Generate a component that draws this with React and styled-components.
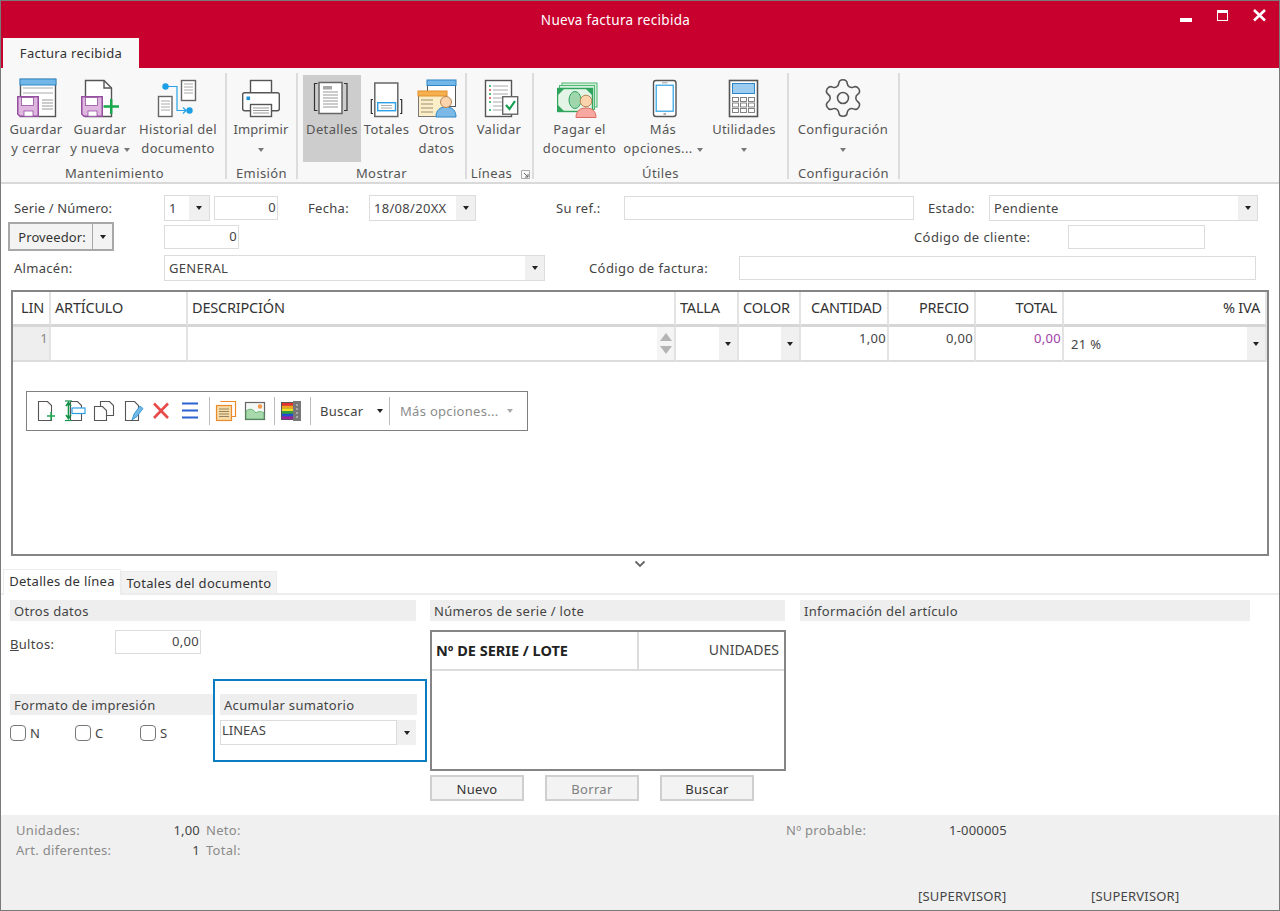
import React from 'react';
import styled, { createGlobalStyle } from 'styled-components';
import { Settings } from 'lucide-react';

const Global = createGlobalStyle`
  html, body { margin: 0; padding: 0; background: #fff; overflow: hidden; }
  * { box-sizing: border-box; }
`;

const Win = styled.div`
  width: 1280px; height: 911px; background: #fff; overflow: hidden;
  outline: 1px solid #7a7a7a; outline-offset: -1px;
  font-family: "Noto Sans", "Open Sans", sans-serif; font-size: 13px; color: #444; letter-spacing: .3px;
  display: flex; flex-direction: column;
`;
const Head = styled.div`height: 68px; background: #c8002d; display: flex; flex-direction: column;`;
const TitleRow = styled.div`height: 38px; display: flex; align-items: center; padding-right: 2px;`;
const Title = styled.div`flex: 1; text-align: center; padding-left: 63px; color: #fff; font-size: 13.5px; padding-top: 1px;`;
const Ctl = styled.div`width: ${p => p.$w}px; height: 38px; display: flex; justify-content: center; align-items: flex-start;`;
const Tab = styled.div`
  margin-left: 3px; width: 136px; height: 30px; background: #f8f8f8; color: #333;
  display: flex; align-items: center; justify-content: center; font-size: 13px;
`;
const Ribbon = styled.div`
  height: 116px; background: #f8f8f8; border-bottom: 2px solid #d9d9d9; padding-top: 5px; display: flex;
`;
const Group = styled.div`
  width: ${p => p.$w}px; height: 106px; border-right: 2px solid #dcdcdc; padding-left: ${p => p.$pl || 0}px;
  display: flex; flex-direction: column;
`;
const Btns = styled.div`display: flex; margin-top: 2px; height: 87px;`;
const RBtn = styled.div`
  width: ${p => p.$w}px; margin-left: ${p => p.$ml || 0}px; height: 87px; padding-top: 1px;
  background: ${p => p.$on ? '#cdcdcd' : 'transparent'};
  display: flex; flex-direction: column; align-items: center; text-align: center;
  line-height: 19px; color: #555; white-space: nowrap; letter-spacing: ${p => p.$ls || '.35px'};
  svg { flex: none; display: block; }
`;
const GLabel = styled.div`
  position: relative; margin-top: 5px; height: 13px; line-height: 13px; text-align: center; color: #555; letter-spacing: .4px;
`;
const Launcher = styled.svg`position: absolute; right: 2px; top: 3px;`;
const LinesText = styled.span`margin-right: 16px;`;
const Caret = styled.span`
  display: inline-block; width: 0; height: 0; vertical-align: middle; flex: none;
  border-left: 3.5px solid transparent; border-right: 3.5px solid transparent;
  border-top: 4px solid ${p => p.$c || '#222'};
  margin-left: ${p => p.$ml || 0}px;
`;

const Form = styled.div`padding-top: 11px;`;
const FormRow = styled.div`
  height: ${p => p.$h}px; margin-bottom: ${p => p.$mb || 0}px; display: flex; align-items: center;
`;
const Lbl = styled.div`
  width: ${p => p.$w}px; margin-left: ${p => p.$ml || 0}px; flex: none; color: #444; white-space: nowrap;
  letter-spacing: ${p => p.$ls || '.3px'};
`;
const BultosLbl = styled(Lbl)`padding-top: 3px;`;
const Input = styled.div`
  width: ${p => p.$w}px; margin-left: ${p => p.$ml || 0}px; height: ${p => p.$h || 24}px; flex: none;
  border: 1px solid #dcdcdc; background: #fff; padding: 0 1px 2px; display: flex; align-items: center;
  justify-content: flex-end; color: #444;
`;
const Combo = styled.div`
  width: ${p => p.$w}px; margin-left: ${p => p.$ml || 0}px; height: ${p => p.$h || 26}px; flex: none;
  border: 1px solid #dcdcdc; background: #fff; display: flex; color: #444;
`;
const ComboText = styled.div`flex: 1; padding: 0 0 1px 4px; display: flex; align-items: center; white-space: nowrap; overflow: hidden;`;
const Drop = styled.div`width: ${p => p.$w || 19}px; flex: none; background: #f0f0f0; display: flex; align-items: center; justify-content: center;`;
const SplitBtn = styled.div`
  margin-left: 8px; width: 106px; height: 29px; flex: none; display: flex; border: 2px solid #a8a8a8; background: #f3f3f3; color: #333;
  letter-spacing: .1px;
`;
const SplitMain = styled.div`width: 83px; border-right: 1px solid #a8a8a8; display: flex; align-items: center; justify-content: center; padding-left: 2px;`;
const SplitArrow = styled.div`flex: 1; display: flex; align-items: center; justify-content: center;`;

const Table = styled.div`
  margin-left: 11px; width: 1258px; height: 266px; border: 2px solid #858585; background: #fff; flex: none;
`;
const GridRow = styled.div`
  display: grid; height: ${p => p.$h}px;
  grid-template-columns: 38px 137px 488px 63px 62px 88px 87px 88px 203px;
`;
const Th = styled.div`
  border-right: 2px solid #e3e3e3; border-bottom: 3px solid #d6d6d6; display: flex; align-items: center;
  justify-content: ${p => p.$a === 'r' ? 'flex-end' : 'flex-start'};
  padding: 0 5px 2px 4px; color: #333; font-size: 14.5px; white-space: nowrap; letter-spacing: -0.2px;
`;
const Td = styled.div`
  position: relative; border-right: 2px solid #e3e3e3; border-bottom: 2px solid #dcdcdc;
  background: ${p => p.$bg || '#fff'}; display: flex;
  justify-content: ${p => p.$a === 'r' ? 'flex-end' : 'flex-start'};
  padding: ${p => p.$pad || '2px 1px 0 0'}; color: ${p => p.$c || '#444'};
`;
const CellDrop = styled.div`
  position: absolute; right: 0; top: 0; bottom: 0; width: 18px; background: #f0f0f0;
  display: flex; align-items: center; justify-content: center;
`;
const Scroll = styled.div`
  position: absolute; right: 0; top: 0; bottom: 0; width: 17px; background: #f4f4f4;
  display: flex; flex-direction: column; align-items: center; justify-content: space-around; padding: 4px 0;
`;
const ArrowUp = styled.span`width: 0; height: 0; border-left: 6px solid transparent; border-right: 6px solid transparent; border-bottom: 8px solid #b4b4b4;`;
const ArrowDown = styled.span`width: 0; height: 0; border-left: 6px solid transparent; border-right: 6px solid transparent; border-top: 8px solid #b4b4b4;`;
const Tool = styled.div`
  margin: 29px 0 0 13px; width: 502px; height: 40px; border: 1px solid #808080; padding-left: 5px;
  display: flex; align-items: center;
`;
const ToolIcon = styled.div`width: 29px; height: 24px; padding-left: 2px; flex: none;`;
const ToolSep = styled.div`width: 1px; height: 28px; background: #bcbcbc; margin: 0 ${p => p.$m ?? 1}px 0 ${p => p.$l ?? 3}px; flex: none;`;
const ToolText = styled.div`
  display: flex; align-items: center; width: ${p => p.$w}px; flex: none; white-space: nowrap; padding-left: ${p => p.$pl || 9}px;
  color: ${p => p.$dim ? '#8c8c8c' : '#444'}; justify-content: space-between; padding-right: ${p => p.$pr || 5}px;
`;

const ChevRow = styled.div`height: 15px; display: flex; justify-content: center; align-items: center;`;
const TabRow = styled.div`height: 24px; display: flex; align-items: flex-end; border-bottom: 2px solid #ededed; padding-left: 3px;`;
const SubTab = styled.div`
  height: ${p => p.$on ? 26 : 22}px; width: ${p => p.$w}px; margin-bottom: ${p => p.$on ? -2 : 0}px; flex: none;
  background: ${p => p.$on ? '#fff' : '#f2f2f2'}; border: 1px solid #ececec; border-bottom: none;
  color: #333; display: flex; align-items: center; justify-content: center; white-space: nowrap; letter-spacing: .3px;
  padding-bottom: ${p => p.$on ? 4 : 0}px;
`;
const Panel = styled.div`
  height: 220px; padding: 5px 0 0 10px; display: grid; grid-template-columns: 417px 355px 462px; column-gap: 3px;
`;
const Col = styled.div`display: flex; flex-direction: column; align-items: flex-start;`;
const Col3 = styled(Col)`margin-left: 12px;`;
const H = styled.div`
  height: 21px; width: ${p => p.$w ? p.$w + 'px' : '100%'}; background: #eeeeee; color: #444; padding-left: 4px;
  display: flex; align-items: center; white-space: nowrap; flex: none;
`;
const BultosRow = styled.div`display: flex; align-items: center; margin-top: 9px; height: 24px;`;
const PrintRow = styled.div`display: flex; margin-top: 25px;`;
const FormatBox = styled.div`width: 203px; padding-top: 15px;`;
const Checks = styled.div`display: flex; margin-top: 10px;`;
const Check = styled.div`width: 65px; display: flex; align-items: center; gap: 4px; color: #444; line-height: 14px;`;
const CheckBox = styled.span`width: 16px; height: 16px; border: 1.5px solid #777; border-radius: 4px; background: #fff; flex: none;`;
const SumBox = styled.div`width: 214px; height: 83px; border: 2px solid #0a7dc2; padding: 13px 0 0 5px;`;
const SumCombo = styled.div`margin-top: 5px; display: flex; height: 25px; width: 196px;`;
const SumText = styled.div`flex: 1; border: 1px solid #dcdcdc; padding-left: 1px; line-height: 18px; color: #444; letter-spacing: 0;`;
const SerialTable = styled.div`
  margin-top: 9px; width: 356px; height: 141px; border: 2px solid #858585; flex: none;
`;
const SerialHead = styled.div`display: grid; grid-template-columns: 205px 1fr; height: 39px; border-bottom: 2px solid #dcdcdc;`;
const SerialTh = styled.div`
  display: flex; align-items: center; padding: 0 5px 2px ${p => p.$r ? 5 : 4}px; white-space: nowrap;
  font-size: ${p => p.$r ? 14 : 14.5}px;
  justify-content: ${p => p.$r ? 'flex-end' : 'flex-start'};
  font-weight: ${p => p.$r ? 400 : 700}; color: ${p => p.$r ? '#444' : '#222'};
  border-left: ${p => p.$r ? '2px solid #dcdcdc' : 'none'}; letter-spacing: 0;
`;
const BtnRow = styled.div`display: flex; gap: 21px; margin-top: 4px;`;
const Btn = styled.div`
  width: 94px; height: 26px; border: 2px solid #cfcfcf; background: #f3f3f3; color: ${p => p.$dim ? '#808080' : '#333'};
  display: flex; align-items: center; justify-content: center; padding-top: 1px;
`;
const Foot = styled.div`flex: 1; background: #f0f0f0; padding-top: 5px;`;
const FootRow = styled.div`display: flex; height: 20px; align-items: center; margin-top: ${p => p.$mt || 0}px;`;
const FLbl = styled.div`
  width: ${p => p.$w}px; margin-left: ${p => p.$ml || 0}px; flex: none; color: #8a8a8a; white-space: nowrap; letter-spacing: .3px;
`;
const FVal = styled.div`
  width: ${p => p.$w}px; margin-left: ${p => p.$ml || 0}px; flex: none; color: #444; white-space: nowrap;
  text-align: ${p => p.$r ? 'right' : 'left'}; letter-spacing: .2px;
`;

const Ic = ({ x, y = 76, w = 44, h = 44, children }) => (
  <svg width={w} height={h} viewBox={`${x} ${y} ${w} ${h}`} fill="none">{children}</svg>
);
const Floppy = ({ x, y }) => (
  <g transform={`translate(${x} ${y})`}>
    <path d="M.75.75H21.25V20.25H3L.75 18Z" fill="#dfb6df" stroke="#94509f" strokeWidth="1.5" />
    <rect x="4.5" y="1.5" width="12" height="8" fill="#fff" stroke="#94509f" strokeWidth=".8" />
    <rect x="7" y="15" width="9" height="5.2" fill="#fff" stroke="#94509f" strokeWidth=".8" />
  </g>
);
const PageLines = ({ x1, x2, ys, c = '#b5b5b5', w = 1.4 }) => (
  <g stroke={c} strokeWidth={w}>{ys.map(y => <path key={y} d={`M${x1} ${y}H${x2}`} />)}</g>
);
const IconSaveClose = () => (
  <Ic x={14}>
    <rect x="20.5" y="79.5" width="35" height="37" fill="#fff" stroke="#555" strokeWidth="1.4" />
    <rect x="20" y="79" width="36" height="6" fill="#72b7e8" stroke="#2f86c6" />
    <PageLines x1={23} x2={53} ys={[88, 93]} c="#aaa" w={1} />
    <PageLines x1={42} x2={53} ys={[100, 103, 106, 109]} c="#999" w={1} />
    <Floppy x={17} y={96} />
  </Ic>
);
const IconSaveNew = () => (
  <Ic x={78}>
    <path d="M85.5 80.5H104L111.5 88V116.5H85.5Z" fill="#fff" stroke="#555" strokeWidth="1.4" />
    <path d="M104 80.5V88H111.5" stroke="#555" strokeWidth="1.4" />
    <Floppy x={81} y={96} />
    <path d="M103.5 106.5H119M111.2 99V114" stroke="#16a84a" strokeWidth="2.4" />
  </Ic>
);
const IconHistory = () => (
  <Ic x={156}>
    <rect x="181.5" y="80.5" width="14" height="20" fill="#fff" stroke="#666" strokeWidth="1.4" />
    <PageLines x1={184} x2={193} ys={[84, 87, 90, 93]} c="#aaa" w={1} />
    <rect x="158.5" y="96.5" width="13.5" height="20" fill="#fff" stroke="#666" strokeWidth="1.4" />
    <PageLines x1={161} x2={170} ys={[101, 104, 107, 110]} c="#aaa" w={1} />
    <path d="M166 86.5H177V110.5H186M183 107.5L186 110.5L183 113.5" stroke="#25a3e6" strokeWidth="1.2" />
    <circle cx="165.5" cy="86.5" r="3.2" fill="#1d9fe6" />
    <circle cx="189.5" cy="110.5" r="3.2" fill="#1d9fe6" />
  </Ic>
);
const IconPrint = () => (
  <Ic x={239}>
    <rect x="250.5" y="80.5" width="21" height="17" fill="#fff" stroke="#555" strokeWidth="1.4" />
    <rect x="242.7" y="92.7" width="36.6" height="18" rx="2" fill="#fff" stroke="#555" strokeWidth="1.4" />
    <rect x="246.5" y="96.5" width="3.6" height="3.6" fill="#1f8fd8" />
    <rect x="250.5" y="104.5" width="21" height="12" fill="#fff" stroke="#555" strokeWidth="1.4" />
    <PageLines x1={253} x2={269} ys={[108, 110.5, 113]} c="#999" w={1} />
  </Ic>
);
const IconDetails = () => (
  <Ic x={310}>
    <path d="M317.5 83.5H314.5V110.5H317.5M344 83.5H347V110.5H344" stroke="#333" strokeWidth="1.2" />
    <rect x="319" y="82.5" width="23" height="31" fill="#fff" stroke="#666" strokeWidth="1.5" />
    <rect x="323" y="86" width="9" height="3.5" fill="#a6a6a6" />
    <PageLines x1={323} x2={338} ys={[92, 95, 98, 101, 104, 107]} />
  </Ic>
);
const IconTotals = () => (
  <Ic x={364}>
    <rect x="373.8" y="83" width="23" height="33.5" fill="#fff" stroke="#666" strokeWidth="1.5" />
    <path d="M372 99.5H370.3V113.5H372M399 99.5H400.7V113.5H399" stroke="#333" strokeWidth="1.2" />
    <rect x="376.7" y="102.7" width="17.8" height="8" fill="#fff" stroke="#2aa0e6" strokeWidth="1.4" />
    <PageLines x1={380} x2={391} ys={[105.5, 108]} c="#aaa" w={1} />
  </Ic>
);
const IconOther = () => (
  <Ic x={414}>
    <rect x="426.5" y="80.5" width="28" height="26" fill="#fff" stroke="#555" strokeWidth="1" />
    <rect x="426" y="80" width="29" height="5.5" fill="#72b7e8" stroke="#2f86c6" />
    <rect x="417.5" y="91.5" width="28" height="25" fill="#fbeec8" stroke="#777" strokeWidth="1" />
    <rect x="417" y="91" width="29" height="5" fill="#f5b04f" stroke="#e18f28" />
    <PageLines x1={420} x2={432} ys={[100, 104, 108, 112]} c="#9b8f6e" w={1} />
    <path d="M435 117C435 110 439 107 445 107C451 107 455 110 455 117Z" fill="#7db9e6" stroke="#2f86c6" />
    <circle cx="445" cy="102" r="5.5" fill="#fbd3ad" stroke="#b88655" />
  </Ic>
);
const IconValidate = () => (
  <Ic x={477}>
    <rect x="485.5" y="80.5" width="26" height="36" fill="#fff" stroke="#555" strokeWidth="1.4" />
    <PageLines x1={493} x2={508} ys={[86, 90, 94, 98, 102, 106, 110]} c="#aaa" w={1} />
    <PageLines x1={489} x2={491} ys={[86, 94, 102, 110]} c="#17a84a" w={1.4} />
    <PageLines x1={489} x2={491} ys={[90, 98]} c="#e24a4a" w={1.4} />
    <rect x="502.7" y="96.7" width="15" height="17.5" fill="#fff" stroke="#666" strokeWidth="1.4" />
    <path d="M506 105L509.5 109L515 101" stroke="#10a050" strokeWidth="2.2" />
  </Ic>
);
const IconPay = () => (
  <Ic x={558}>
    <rect x="563" y="83" width="35" height="24" fill="#d4efdb" stroke="#4fb873" />
    <rect x="560.5" y="85.5" width="35" height="24" fill="#d4efdb" stroke="#4fb873" />
    <rect x="558.5" y="88.5" width="35" height="23" fill="#e4f5e8" stroke="#2ea45c" strokeWidth="1.4" />
    <ellipse cx="576" cy="100" rx="6" ry="8.5" fill="#9fd6ac" stroke="#2ea45c" />
    <path d="M559 89H565L559 95ZM559 111V105L565 111ZM593 89V95L587 89Z" fill="#2ea45c" />
    <path d="M577 117.5C577 111 581 108 587 108C593 108 597 111 597 117.5Z" fill="#f7a8a0" stroke="#dd6a60" />
    <circle cx="587" cy="101" r="5.8" fill="#fbd3ad" stroke="#b88655" />
  </Ic>
);
const IconPhone = () => (
  <Ic x={642}>
    <rect x="654.5" y="80.5" width="22.5" height="36" rx="2.5" fill="#fff" stroke="#555" strokeWidth="1.4" />
    <rect x="657.2" y="85.2" width="17" height="26" fill="#fff" stroke="#2aa0e6" strokeWidth="1.2" />
    <path d="M663 82.8H668.5" stroke="#999" />
    <path d="M664.5 114H667" stroke="#777" strokeWidth="1.2" />
  </Ic>
);
const IconCalc = () => (
  <Ic x={724}>
    <rect x="731.5" y="80.5" width="28" height="36" fill="#fff" stroke="#555" strokeWidth="1.6" />
    <rect x="734.5" y="83.5" width="22" height="10" fill="#9ccdf0" stroke="#2f86c6" />
    {[97.5, 103, 108.5].map(y => [734.5, 742.5, 750.5].map(x => (
      <rect key={`${x}-${y}`} x={x} y={y} width="6" height="4" fill="#fff" stroke="#777" strokeWidth=".9" />
    )))}
  </Ic>
);
const SmallPage = ({ x, y = 401.5, w = 13, h = 19 }) => (
  <path d={`M${x} ${y}H${x + w - 4}L${x + w} ${y + 4}V${y + h}H${x}Z`} fill="#fff" stroke="#555" strokeWidth="1.1" />
);
const Sm = ({ x, children }) => <Ic x={x} y={399} w={24} h={24}>{children}</Ic>;

const Icons = [
  () => <Sm x={34}><SmallPage x={38.5} /><path d="M47 416H55M51 412V420" stroke="#20a84f" strokeWidth="1.4" /></Sm>,
  () => <Sm x={63}>
    <SmallPage x={70.5} y={401.5} w={11} h={19} />
    <rect x="72" y="408" width="13" height="5.5" fill="#fff" stroke="#2a9ee4" strokeWidth="1.2" />
    <path d="M68.5 404V417M66 406L68.5 402.5L71 406M66 415L68.5 418.5L71 415" stroke="#17924a" strokeWidth="1.6" />
    <path d="M65 420.5H72" stroke="#17924a" strokeWidth="1.2" /><path d="M65 401H72" stroke="#17924a" strokeWidth="1.2" />
  </Sm>,
  () => <Sm x={92}>
    <SmallPage x={100.5} y={401.5} w={13} h={14} />
    <SmallPage x={94.5} y={406.5} w={12} h={14} />
  </Sm>,
  () => <Sm x={121}>
    <SmallPage x={125.5} />
    <path d="M132 420L134 414L140 406L143 408.5L137 416.5Z" fill="#6fb8e8" stroke="#2a8fd0" strokeWidth=".8" />
  </Sm>,
  () => <Sm x={150}><path d="M154 403.5L168 418M168 403.5L154 418" stroke="#e84a4a" strokeWidth="2.6" /></Sm>,
  () => <Sm x={179}><path d="M182 403.5H198M182 410.5H198M182 417.5H198" stroke="#2a62d0" strokeWidth="2" /></Sm>,
  () => <Sm x={213}>
    <path d="M220.5 401.5H235.5V416.5H232" stroke="#ea8a2a" strokeWidth="1.2" />
    <rect x="216.5" y="405.5" width="15" height="15" fill="#f6dba6" stroke="#ea8a2a" strokeWidth="1.2" />
    <PageLines x1={219} x2={229} ys={[409, 411.5, 414, 416.5]} c="#8e7a55" w={.9} />
  </Sm>,
  () => <Sm x={242}>
    <rect x="245.5" y="402.5" width="19" height="17" fill="#f4f8f4" stroke="#666" strokeWidth="1.2" />
    <path d="M246 418V411C250 408 253 409 256 413C258 411 261 411 264 413V419H246Z" fill="#a7d9ac" stroke="#4ea760" strokeWidth=".8" />
    <circle cx="260" cy="406.5" r="2.2" fill="#f29a4a" />
  </Sm>,
  () => <Sm x={278}>
    <rect x="281" y="402" width="20" height="18" fill="#555" />
    <rect x="293" y="401" width="8" height="20" fill="#777" />
    {['#e83030', '#f0a020', '#f0e020', '#30a040', '#2050d0', '#a020a0'].map((c, i) => (
      <rect key={c} x="282" y={403 + i * 2.7} width="11" height="2.7" fill={c} />
    ))}
    <PageLines x1={296} x2={298} ys={[405, 409, 413, 417]} c="#ddd" w={1} />
  </Sm>,
];

const RibBtn = ({ w, ml, on, ls, icon, lines, caret }) => (
  <RBtn $w={w} $ml={ml} $on={on} $ls={ls}>
    {icon}
    <div>{lines[0]}</div>
    <div>{lines[1]}{caret === 'inline' && <Caret $c="#777" $ml={4} />}{caret === 'below' && <Caret $c="#777" />}</div>
  </RBtn>
);

const TblHead = [
  ['LIN', 'r'], ['ARTÍCULO'], ['DESCRIPCIÓN'], ['TALLA'], ['COLOR'], ['CANTIDAD', 'r'], ['PRECIO', 'r'], ['TOTAL', 'r'], ['% IVA', 'r'],
];

export default function App() {
  return (
    <Win>
      <Global />
      <Head>
        <TitleRow>
          <Title>Nueva factura recibida</Title>
          <Ctl $w={36}>
            <svg width="36" height="38"><rect x="12" y="18" width="12" height="4" fill="#fff" /></svg>
          </Ctl>
          <Ctl $w={36}>
            <svg width="36" height="38"><rect x="13.5" y="10.5" width="10" height="10" fill="none" stroke="#fff" /><rect x="13" y="10" width="11" height="3" fill="#fff" /></svg>
          </Ctl>
          <Ctl $w={38}>
            <svg width="38" height="38"><path d="M14 10L25 20.5M25 10L14 20.5" stroke="#fff" strokeWidth="2.6" /></svg>
          </Ctl>
        </TitleRow>
        <Tab>Factura recibida</Tab>
      </Head>
      <Ribbon>
        <Group $w={227} $pl={4}>
          <Btns>
            <RibBtn w={64} icon={<IconSaveClose />} lines={['Guardar', 'y cerrar']} />
            <RibBtn w={64} icon={<IconSaveNew />} lines={['Guardar', 'y nueva']} caret="inline" />
            <RibBtn w={92} icon={<IconHistory />} lines={['Historial del', 'documento']} />
          </Btns>
          <GLabel>Mantenimiento</GLabel>
        </Group>
        <Group $w={71}>
          <Btns>
            <RibBtn w={68} ls=".1px" icon={<IconPrint />} lines={['Imprimir', '']} caret="below" />
          </Btns>
          <GLabel>Emisión</GLabel>
        </Group>
        <Group $w={169}>
          <Btns>
            <RibBtn w={58} ml={5} on icon={<IconDetails />} lines={['Detalles', '']} />
            <RibBtn w={51} icon={<IconTotals />} lines={['Totales', '']} />
            <RibBtn w={49} icon={<IconOther />} lines={['Otros', 'datos']} />
          </Btns>
          <GLabel>Mostrar</GLabel>
        </Group>
        <Group $w={67}>
          <Btns>
            <RibBtn w={64} icon={<IconValidate />} lines={['Validar', '']} />
          </Btns>
          <GLabel>
            <LinesText>Líneas</LinesText>
            <Launcher width="9" height="9"><path d="M.5 8.5V.5H8.5V8.5Z" fill="none" stroke="#aaa" /><path d="M3 3L7 7M7 4V7H4" fill="none" stroke="#666" /></Launcher>
          </GLabel>
        </Group>
        <Group $w={255}>
          <Btns>
            <RibBtn w={92} icon={<IconPay />} lines={['Pagar el', 'documento']} />
            <RibBtn w={76} icon={<IconPhone />} lines={['Más', 'opciones...']} caret="inline" />
            <RibBtn w={87} ls=".25px" icon={<IconCalc />} lines={['Utilidades', '']} caret="below" />
          </Btns>
          <GLabel>Útiles</GLabel>
        </Group>
        <Group $w={111}>
          <Btns>
            <RibBtn w={108} icon={<Settings size={44} color="#555" strokeWidth={0.85} />} lines={['Configuración', '']} caret="below" />
          </Btns>
          <GLabel>Configuración</GLabel>
        </Group>
      </Ribbon>

      <Form>
        <FormRow $h={26} $mb={1}>
          <Lbl $w={150} $ml={14} $ls=".15px">Serie / Número:</Lbl>
          <Combo $w={46}><ComboText>1</ComboText><Drop $w={20}><Caret /></Drop></Combo>
          <Input $w={64} $ml={4} $h={24}>0</Input>
          <Lbl $w={61} $ml={30}>Fecha:</Lbl>
          <Combo $w={107}><ComboText>18/08/20XX</ComboText><Drop><Caret /></Drop></Combo>
          <Lbl $w={68} $ml={80}>Su ref.:</Lbl>
          <Input $w={290} />
          <Lbl $w={61} $ml={14}>Estado:</Lbl>
          <Combo $w={269}><ComboText>Pendiente</ComboText><Drop><Caret /></Drop></Combo>
        </FormRow>
        <FormRow $h={29} $mb={4}>
          <SplitBtn><SplitMain>Proveedor:</SplitMain><SplitArrow><Caret /></SplitArrow></SplitBtn>
          <Input $w={75} $ml={50}>0</Input>
          <Lbl $w={154} $ml={675} $ls=".4px">Código de cliente:</Lbl>
          <Input $w={137} />
        </FormRow>
        <FormRow $h={26} $mb={9}>
          <Lbl $w={150} $ml={14}>Almacén:</Lbl>
          <Combo $w={381}><ComboText>GENERAL</ComboText><Drop><Caret /></Drop></Combo>
          <Lbl $w={150} $ml={44} $ls=".4px">Código de factura:</Lbl>
          <Input $w={517} />
        </FormRow>
      </Form>

      <Table>
        <GridRow $h={35}>
          {TblHead.map(([t, a]) => <Th key={t} $a={a}>{t}</Th>)}
        </GridRow>
        <GridRow $h={35}>
          <Td $bg="#eeeeee" $a="r" $c="#888">1</Td>
          <Td />
          <Td><Scroll><ArrowUp /><ArrowDown /></Scroll></Td>
          <Td><CellDrop><Caret /></CellDrop></Td>
          <Td><CellDrop><Caret /></CellDrop></Td>
          <Td $a="r">1,00</Td>
          <Td $a="r">0,00</Td>
          <Td $a="r" $c="#a040a8">0,00</Td>
          <Td $pad="8px 0 0 7px">21 %<CellDrop><Caret /></CellDrop></Td>
        </GridRow>
        <Tool>
          {Icons.slice(0, 6).map((I, i) => <ToolIcon key={i}><I /></ToolIcon>)}
          <ToolSep />
          {Icons.slice(6, 8).map((I, i) => <ToolIcon key={i}><I /></ToolIcon>)}
          <ToolSep $l={5} />
          {Icons.slice(8).map((I, i) => <ToolIcon key={i}><I /></ToolIcon>)}
          <ToolSep $l={5} />
          <ToolText $w={77} $pl={8} $pr={6}>Buscar<Caret /></ToolText>
          <ToolSep $l={0} $m={0} />
          <ToolText $w={132} $pl={10} $dim $pr={9}>Más opciones...<Caret $c="#aaa" /></ToolText>
        </Tool>
      </Table>

      <ChevRow>
        <svg width="12" height="8"><path d="M1.5 1.5L6 6L10.5 1.5" fill="none" stroke="#666" strokeWidth="1.8" /></svg>
      </ChevRow>
      <TabRow>
        <SubTab $on $w={118}>Detalles de línea</SubTab>
        <SubTab $w={156}>Totales del documento</SubTab>
      </TabRow>
      <Panel>
        <Col>
          <H $w={406}>Otros datos</H>
          <BultosRow>
            <BultosLbl $w={105}><u>B</u>ultos:</BultosLbl>
            <Input $w={86} $h={24}>0,00</Input>
          </BultosRow>
          <PrintRow>
            <FormatBox>
              <H>Formato de impresión</H>
              <Checks>
                <Check><CheckBox />N</Check>
                <Check><CheckBox />C</Check>
                <Check><CheckBox />S</Check>
              </Checks>
            </FormatBox>
            <SumBox>
              <H $w={197}>Acumular sumatorio</H>
              <SumCombo>
                <SumText>LINEAS</SumText>
                <Drop><Caret /></Drop>
              </SumCombo>
            </SumBox>
          </PrintRow>
        </Col>
        <Col>
          <H>Números de serie / lote</H>
          <SerialTable>
            <SerialHead>
              <SerialTh>Nº DE SERIE / LOTE</SerialTh>
              <SerialTh $r>UNIDADES</SerialTh>
            </SerialHead>
          </SerialTable>
          <BtnRow>
            <Btn>Nuevo</Btn>
            <Btn $dim>Borrar</Btn>
            <Btn>Buscar</Btn>
          </BtnRow>
        </Col>
        <Col3>
          <H>Información del artículo</H>
        </Col3>
      </Panel>
      <Foot>
        <FootRow>
          <FLbl $w={130} $ml={16}>Unidades:</FLbl>
          <FVal $w={54} $r>1,00</FVal>
          <FLbl $w={580} $ml={6}>Neto:</FLbl>
          <FLbl $w={163}>Nº probable:</FLbl>
          <FVal $w={100}>1-000005</FVal>
        </FootRow>
        <FootRow>
          <FLbl $w={130} $ml={16}>Art. diferentes:</FLbl>
          <FVal $w={54} $r>1</FVal>
          <FLbl $w={80} $ml={6}>Total:</FLbl>
        </FootRow>
        <FootRow $mt={26}>
          <FVal $w={173} $ml={918}>[SUPERVISOR]</FVal>
          <FVal $w={120}>[SUPERVISOR]</FVal>
        </FootRow>
      </Foot>
    </Win>
  );
}
